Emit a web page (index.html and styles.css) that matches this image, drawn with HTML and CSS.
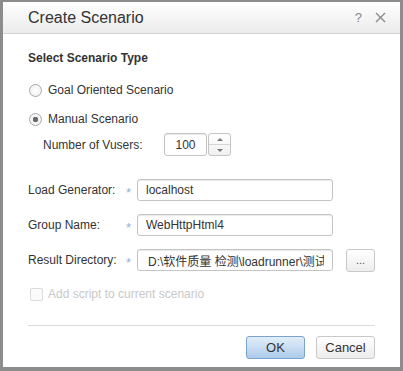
FILE: index.html
```html
<!DOCTYPE html>
<html lang="en">
<head>
  <meta charset="UTF-8" />
  <title>Create Scenario</title>
  <link rel="stylesheet" href="styles.css">
</head>
<body>
  <div class="dialog">
    <div class="title-bar">
      <span class="title">Create Scenario</span>
      <span class="title-icons">
        <span class="help">?</span>
        <svg class="close" width="11" height="11" viewBox="0 0 11 11">
          <path d="M1 1 L10 10 M10 1 L1 10" stroke="#8a8a8a" stroke-width="1.4" />
        </svg>
      </span>
    </div>

    <div class="content">
      <div class="section-title">Select Scenario Type</div>

      <label class="radio-row first">
        <input type="radio" name="type" />
        <span>Goal Oriented Scenario</span>
      </label>
      <label class="radio-row">
        <input type="radio" name="type" checked />
        <span>Manual Scenario</span>
      </label>

      <div class="vusers-row">
        <span class="vusers-label">Number of Vusers:</span>
        <input type="text" class="vusers-input" value="100" />
        <span class="spinner">
          <span class="spin-up"></span>
          <span class="spin-down"></span>
        </span>
      </div>

      <div class="field-row load">
        <span class="field-label">Load Generator:</span>
        <span class="star">*</span>
        <input type="text" class="field-input" value="localhost" />
      </div>

      <div class="field-row">
        <span class="field-label">Group Name:</span>
        <span class="star">*</span>
        <input type="text" class="field-input" value="WebHttpHtml4" />
      </div>

      <div class="field-row">
        <span class="field-label">Result Directory:</span>
        <span class="star">*</span>
        <input type="text" class="field-input dir" value="D:\软件质量 检测\loadrunner\测试报告\res" />
        <button class="browse">...</button>
      </div>

      <label class="check-row">
        <input type="checkbox" disabled />
        <span>Add script to current scenario</span>
      </label>

      <div class="separator"></div>

      <div class="buttons">
        <button class="btn ok">OK</button>
        <button class="btn cancel">Cancel</button>
      </div>
    </div>
  </div>
</body>
</html>
```

FILE: styles.css
```css
html, body {
  margin: 0;
  height: 100%;
}

body {
  font-family: "Liberation Sans", Arial, "Noto Sans CJK SC", sans-serif;
  font-size: 12px;
  color: #333;
  background: #fff;
}

.dialog {
  box-sizing: border-box;
  width: 403px;
  height: 371px;
  border: 3px solid #8c8c8c;
  border-top-width: 2px;
  border-bottom-width: 4px;
  background: #fff;
  display: flex;
  flex-direction: column;
}

.title-bar {
  height: 31px;
  display: flex;
  align-items: center;
  justify-content: space-between;
  padding: 0 14px 0 25px;
  background: linear-gradient(#ffffff, #ebebeb);
  border-bottom: 1px solid #d4d4d4;
}

.title {
  font-size: 16px;
  color: #333;
}

.title-icons {
  display: flex;
  align-items: center;
  gap: 13px;
}

.help {
  font-size: 13px;
  color: #888;
}

.content {
  padding: 0 25px;
  display: flex;
  flex-direction: column;
}

.section-title {
  margin-top: 16px;
  font-weight: bold;
  line-height: 16px;
}

.radio-row {
  display: flex;
  align-items: center;
  height: 20px;
  margin-top: 9px;
}

.radio-row.first {
  margin-top: 14px;
}

.radio-row input {
  appearance: none;
  width: 13px;
  height: 13px;
  margin: 0 6px 0 1px;
  border: 1px solid #a8a8a8;
  border-radius: 50%;
  background: radial-gradient(#fff, #ececec);
  box-sizing: border-box;
}

.radio-row input:checked {
  background: radial-gradient(#6a6a6a 0, #6a6a6a 2.5px, #f4f4f4 3px);
}

.vusers-row {
  display: flex;
  align-items: center;
  margin-top: 4px;
  height: 23px;
}

.vusers-label {
  margin-left: 15px;
  width: 121px;
}

.vusers-input {
  box-sizing: border-box;
  width: 43px;
  height: 23px;
  border: 1px solid #c4c4c4;
  border-radius: 3px;
  text-align: center;
  font: inherit;
  color: #333;
  padding: 0;
  box-shadow: inset 0 1px 1px #e8e8e8;
}

.spinner {
  box-sizing: border-box;
  width: 23px;
  height: 23px;
  margin-left: 1px;
  border: 1px solid #c4c4c4;
  border-radius: 3px;
  display: flex;
  flex-direction: column;
  background: linear-gradient(#fff, #f0f0f0);
}

.spin-up,
.spin-down {
  flex: 1;
  display: flex;
  align-items: center;
  justify-content: center;
}

.spin-up {
  border-bottom: 1px solid #d4d4d4;
}

.spin-up::after {
  content: "";
  border: 3px solid transparent;
  border-bottom: 3px solid #777;
  border-top: none;
}

.spin-down::after {
  content: "";
  border: 3px solid transparent;
  border-top: 3px solid #777;
  border-bottom: none;
}

.field-row {
  display: flex;
  align-items: center;
  margin-top: 13px;
  height: 22px;
}

.field-row.load {
  margin-top: 23px;
}

.field-label {
  width: 98px;
}

.star {
  width: 11px;
  color: #8fb3d6;
  font-size: 13px;
  padding-top: 5px;
}

.field-input {
  box-sizing: border-box;
  width: 196px;
  height: 22px;
  border: 1px solid #c4c4c4;
  border-radius: 3px;
  padding: 0 8px;
  font: inherit;
  color: #333;
  box-shadow: inset 0 1px 1px #e8e8e8;
}

.field-input.dir {
  padding-left: 10px;
}

.browse {
  box-sizing: border-box;
  width: 29px;
  height: 23px;
  margin-left: 13px;
  border: 1px solid #c8c8c8;
  border-radius: 3px;
  background: linear-gradient(#fff, #ededed);
  font: inherit;
  font-size: 11px;
  color: #555;
  padding: 0;
}

.check-row {
  display: flex;
  align-items: center;
  height: 16px;
  margin-top: 15px;
  color: #c8c8c8;
}

.check-row input {
  appearance: none;
  width: 13px;
  height: 13px;
  margin: 0 5px 0 2px;
  border: 1px solid #dcdcdc;
  border-radius: 2px;
  background: #fafafa;
}

.separator {
  margin-top: 23px;
  border-top: 1px solid #dadada;
}

.buttons {
  display: flex;
  justify-content: flex-end;
  gap: 11px;
  margin-top: 10px;
}

.btn {
  box-sizing: border-box;
  width: 59px;
  height: 23px;
  border-radius: 3px;
  font: inherit;
  font-size: 13px;
  color: #333;
  padding: 0;
}

.ok {
  border: 1px solid #7aa4cf;
  background: linear-gradient(#e2eefa, #aecbea);
}

.cancel {
  border: 1px solid #c8c8c8;
  background: linear-gradient(#fff, #ececec);
}
```
